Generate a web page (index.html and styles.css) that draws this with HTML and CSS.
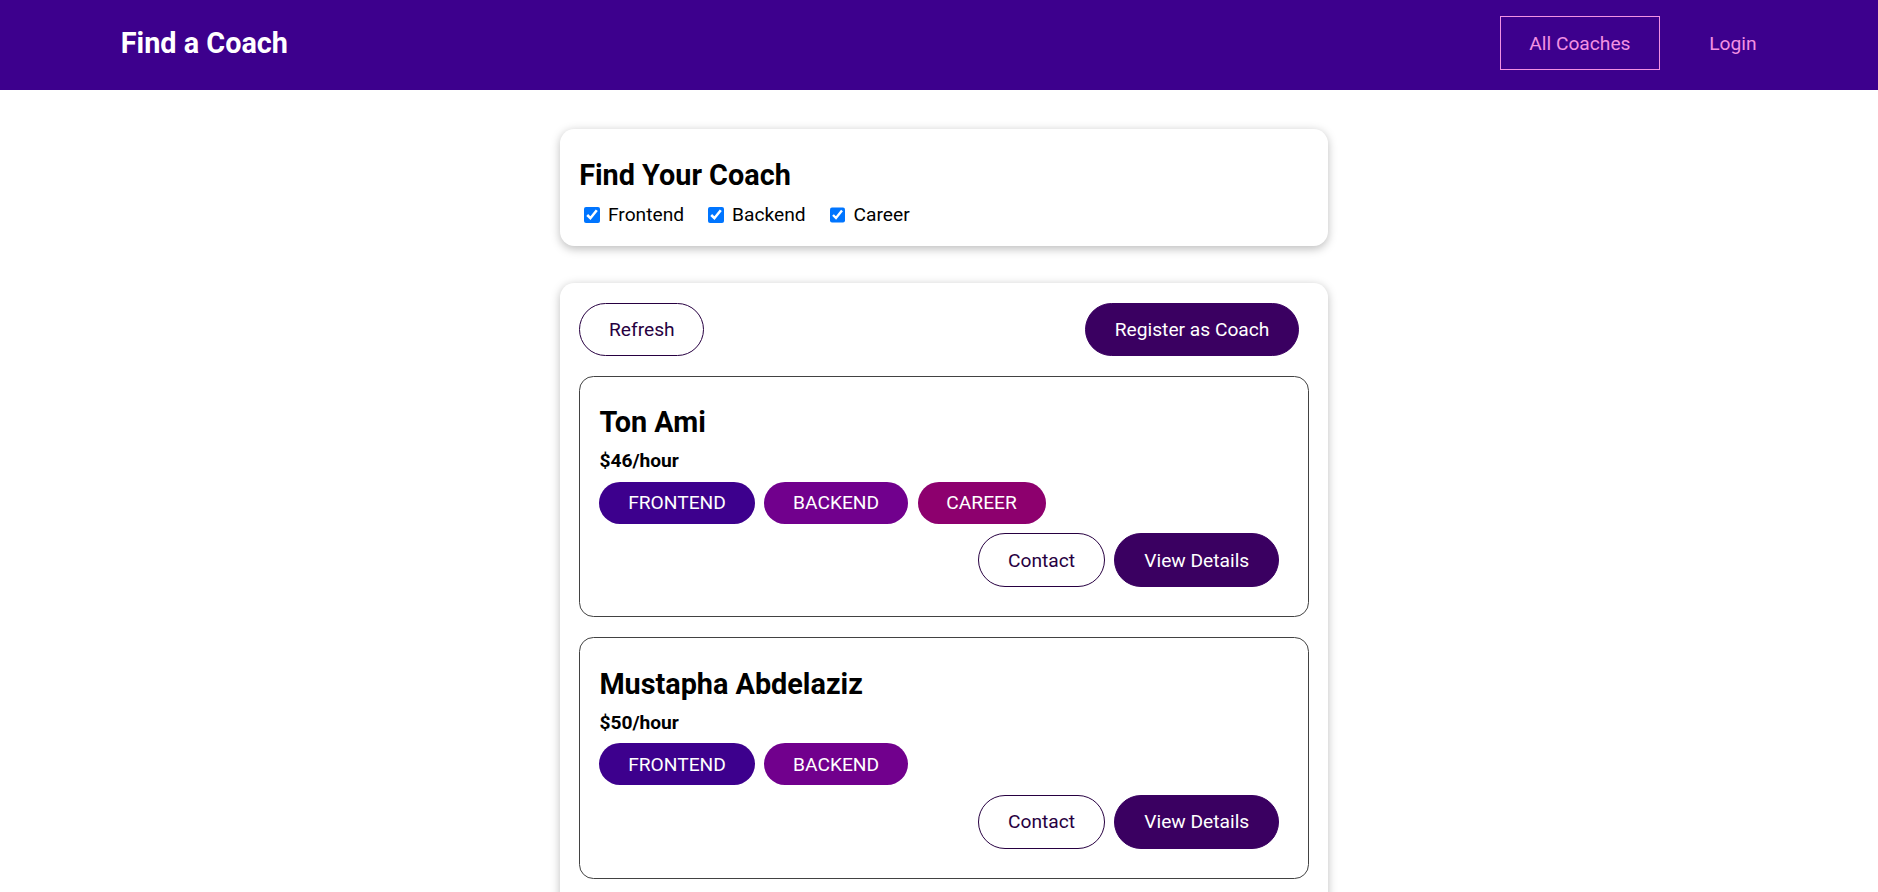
FILE: index.html
```html
<!DOCTYPE html>
<html lang="en">
<head>
<meta charset="utf-8">
<title>Find a Coach</title>
<link rel="stylesheet" href="styles.css">
</head>
<body>
<header class="site-header">
  <nav class="nav">
    <h1 class="brand"><a class="brand-link" href="#">Find a Coach</a></h1>
    <ul class="nav-list">
      <li class="nav-item"><a class="nav-link is-active" href="#">All Coaches</a></li>
      <li class="nav-item"><a class="nav-link" href="#">Login</a></li>
    </ul>
  </nav>
</header>
<main class="page">
  <section class="card filter-card">
    <h2 class="filter-title">Find Your Coach</h2>
    <div class="filter-row">
      <span class="filter-option"><input class="filter-check" type="checkbox" id="frontend" checked><label class="filter-label" for="frontend">Frontend</label></span>
      <span class="filter-option"><input class="filter-check" type="checkbox" id="backend" checked><label class="filter-label" for="backend">Backend</label></span>
      <span class="filter-option"><input class="filter-check" type="checkbox" id="career" checked><label class="filter-label" for="career">Career</label></span>
    </div>
  </section>
  <section class="card list-card">
    <div class="controls">
      <button class="btn btn-outline" type="button">Refresh</button>
      <a class="btn" href="#">Register as Coach</a>
    </div>
    <ul class="coach-list">
      <li class="coach">
        <h3 class="coach-name">Ton Ami</h3>
        <h4 class="coach-rate">$46/hour</h4>
        <div class="badges"><span class="badge frontend">FRONTEND</span><span class="badge backend">BACKEND</span><span class="badge career">CAREER</span></div>
        <div class="actions"><a class="btn btn-outline" href="#">Contact</a><a class="btn" href="#">View Details</a></div>
      </li>
      <li class="coach">
        <h3 class="coach-name">Mustapha Abdelaziz</h3>
        <h4 class="coach-rate">$50/hour</h4>
        <div class="badges"><span class="badge frontend">FRONTEND</span><span class="badge backend">BACKEND</span></div>
        <div class="actions"><a class="btn btn-outline" href="#">Contact</a><a class="btn" href="#">View Details</a></div>
      </li>
    </ul>
  </section>
</main>
</body>
</html>
```

FILE: styles.css
```css
* {
  box-sizing: border-box;
}

html {
  font-family: Roboto, "Liberation Sans", sans-serif;
  font-size: 19.2px;
  overflow: hidden;
}

body {
  margin: 0;
  color: #000;
}

/* Header */
.site-header {
  width: 100%;
  height: 90px;
  background-color: #3d008d;
  display: flex;
  align-items: center;
  padding-bottom: 4px;
}

.nav {
  width: 1705px;
  margin-left: 91px;
  display: flex;
  justify-content: space-between;
  align-items: center;
}

.brand {
  margin: 0;
  font-size: 28.8px;
}

.brand-link {
  display: block;
  color: #fff;
  text-decoration: none;
  padding: 14.4px 28.8px;
  border: 1px solid transparent;
}

.nav-list {
  list-style: none;
  margin: 0;
  padding: 0;
  display: flex;
  align-items: center;
}

.nav-item {
  margin: 0 9.6px;
}

.nav-link {
  display: inline-block;
  color: #f391e3;
  text-decoration: none;
  padding: 14.4px 28.8px;
  border: 1px solid transparent;
}

.nav-link.is-active {
  border-color: #f391e3;
}

/* Page */
.page {
  padding-left: 10px;
  padding-top: 39px;
}

.card {
  width: 768px;
  margin: 0 auto;
  padding: 19.2px;
  border-radius: 14.4px;
  background: #fff;
  box-shadow: 0 2.4px 9.6px rgba(0, 0, 0, 0.26);
}

.filter-card {
  margin-bottom: 37.4px;
}

.filter-title {
  margin: 9.6px 0;
  font-size: 28.8px;
}

.filter-row {
  display: flex;
  align-items: center;
  height: 25.5px;
  padding-top: 1.5px;
}

.filter-option {
  display: inline-flex;
  align-items: center;
  margin-right: 19.2px;
}

.filter-check {
  width: 15.6px;
  height: 15.6px;
  margin: 0 3.6px 0 4.8px;
  accent-color: #0075ff;
}

.filter-label {
  margin-left: 4.8px;
}

/* Buttons */
.btn {
  display: inline-block;
  text-decoration: none;
  padding: 14.4px 28.8px;
  font: inherit;
  line-height: normal;
  background-color: #3a0061;
  border: 1px solid #3a0061;
  color: #fff;
  border-radius: 36px;
  margin-right: 9.6px;
  cursor: pointer;
}

.btn-outline {
  background-color: transparent;
  border-color: #270041;
  color: #270041;
}

.controls {
  display: flex;
  justify-content: space-between;
  align-items: flex-start;
}

/* Coach list */
.coach-list {
  list-style: none;
  margin: 0;
  padding: 0;
}

.coach {
  margin: 19.2px 0;
  border: 1px solid #424242;
  border-radius: 14.4px;
  padding: 19.2px;
}

.coach + .coach {
  margin-top: 20.4px;
}

.coach-name {
  font-size: 28.8px;
  margin: 9.6px 0;
}

.coach-rate {
  font-size: 19.2px;
  margin: 9.6px 0;
}

.badges {
  display: flex;
  margin: 9.6px 0;
}

.badge {
  display: inline-block;
  border-radius: 36px;
  padding: 9.6px 28.8px;
  margin-right: 9.6px;
  background-color: #ccc;
  color: #fff;
}

.badge.frontend {
  background-color: #3d008d;
}

.badge.backend {
  background-color: #71008d;
}

.badge.career {
  background-color: #8d006e;
}

.actions {
  display: flex;
  justify-content: flex-end;
  margin: 9.6px 0;
}
```
